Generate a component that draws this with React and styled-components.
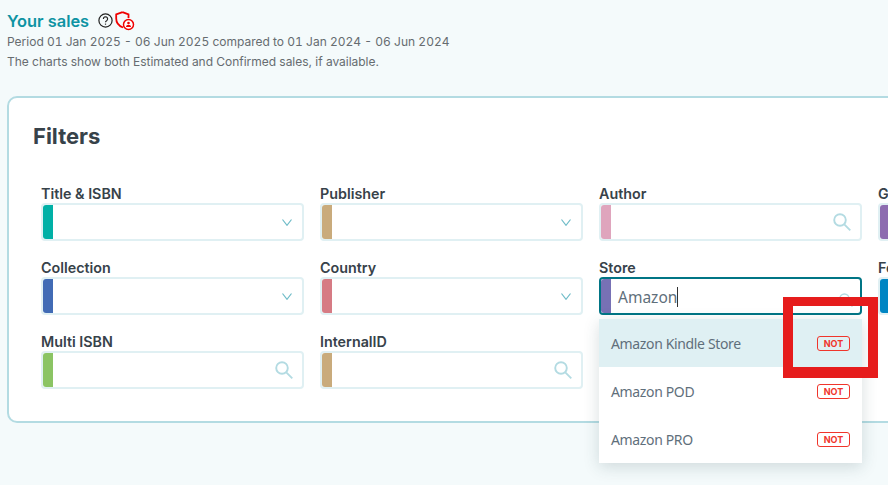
import React from "react";
import styled, {createGlobalStyle} from "styled-components";

const GlobalStyle = createGlobalStyle`
  html, body {
    margin: 0;
    height: 100%;
    overflow: hidden;
    background: #f4fafb;
    font-family: Inter, "Noto Sans", sans-serif;
  }
`;

const fields = [
  {label: "Title & ISBN", color: "#00b0a6", icon: "chevron"},
  {label: "Publisher", color: "#c9ab7c", icon: "chevron"},
  {label: "Author", color: "#dfa5bd", icon: "search"},
  {label: "Genre", color: "#8d6cb0", icon: "chevron"},
  {label: "Collection", color: "#416bb5", icon: "chevron"},
  {label: "Country", color: "#d67b84", icon: "chevron"},
  {label: "Store", color: "#7771b5", icon: "search", value: "Amazon", active: true},
  {label: "Format", color: "#0085c3", icon: "chevron"},
  {label: "Multi ISBN", color: "#8bc464", icon: "search"},
  {label: "InternalID", color: "#c9ab7c", icon: "search"},
];

const stores = ["Amazon Kindle Store", "Amazon POD", "Amazon PRO"];

const Chevron = () => (
  <svg width="10" height="7" viewBox="0 0 10 7" fill="none" stroke="#6fbcc8" strokeWidth="1.2">
    <path d="M.5.5 5 6.3 9.500.5" />
  </svg>
);

const Search = ({size = 18}) => (
  <svg width={size} height={size} viewBox="0 0 18 18" fill="none" stroke="#b3dbe2" strokeWidth="1.9">
    <circle cx="7" cy="7" r="5.800" />
    <path d="M11.300 11.300l6 6" />
  </svg>
);

const Help = () => (
  <svg width="15" height="15" viewBox="0 0 15 15" fill="none" stroke="#222" strokeWidth="1.2">
    <circle cx="7.500" cy="7.500" r="6.600" />
    <path d="M5.400 5.900a2.100 2.100 0 1 1 3.200 1.800c-.7.4-1.100.8-1.100 1.600" />
    <path d="M7.500 10.600v1.100" />
  </svg>
);

const ShieldLock = () => (
  <svg width="20" height="20" viewBox="0 0 20 20" fill="none" stroke="#f00000" strokeWidth="1.800">
    <path d="M7.500 1.200 13.500 3.400V7M8 16.500C4 15 1.200 12 1.200 7.500V3.400L7.500 1.200" />
    <circle cx="13.500" cy="13.500" r="5" fill="#fff" strokeWidth="1.500" />
    <circle cx="13.500" cy="12" r="1.300" fill="#f00000" stroke="none" />
    <path d="M11 16c0-3 5-3 5 0z" fill="#f00000" stroke="none" />
  </svg>
);

function App() {
  return (
    <Page>
      <GlobalStyle />
      <Header>
        <TitleRow>
          <Title>Your sales</Title>
          <Help />
          <ShieldLock />
        </TitleRow>
        <Note $tabular>Period 01 Jan 2025 - 06 Jun 2025 compared to 01 Jan 2024 - 06 Jun 2024</Note>
        <Note>The charts show both Estimated and Confirmed sales, if available.</Note>
      </Header>
      <Card>
        <Heading>Filters</Heading>
        <Grid>
          {fields.map((f) => (
            <Field key={f.label}>
              <Label>{f.label}</Label>
              <InputBox $active={f.active}>
                <Swatch $color={f.color} />
                {f.value && (
                  <Value>
                    {f.value}
                    <Caret />
                  </Value>
                )}
                {f.icon === "chevron" ? (
                  <IconSlot>
                    <Chevron />
                  </IconSlot>
                ) : (
                  <IconSlot $search $active={f.active}>
                    <Search size={f.active ? 14 : 18} />
                  </IconSlot>
                )}
              </InputBox>
              {f.active && (
                <Dropdown>
                  {stores.map((s, i) => (
                    <Option key={s} $selected={i === 0}>
                      <OptionText>{s}</OptionText>
                      <NotBadge>NOT</NotBadge>
                    </Option>
                  ))}
                </Dropdown>
              )}
            </Field>
          ))}
        </Grid>
      </Card>
      <Highlight />
    </Page>
  );
}
export default App;

const Page = styled.div`
  position: relative;
  width: 888px;
  height: 485px;
  overflow: hidden;
  padding: 9px 0 0 7px;
  box-sizing: border-box;
`;
const Header = styled.div`
  height: 87px;
`;
const TitleRow = styled.div`
  display: flex;
  align-items: center;
  gap: 9px;
  height: 23px;
  svg:last-child {
    margin-left: -7px;
  }
`;
const Title = styled.h1`
  margin: 0;
  font-size: 16.4px;
  font-weight: 600;
  color: #0e93a3;
`;
const Note = styled.p`
  margin: 0;
  font-size: 12px;
  line-height: 20px;
  color: #666c70;
  letter-spacing: ${(p) => (p.$tabular ? "0" : "-0.03px")};
  font-variant-numeric: ${(p) => (p.$tabular ? "tabular-nums" : "normal")};
`;
const Card = styled.section`
  width: 1100px;
  height: 327px;
  box-sizing: border-box;
  padding: 23px 24px 0 24px;
  background: #fff;
  border: 2px solid #b3dbe2;
  border-radius: 10px;
`;
const Heading = styled.h2`
  margin: 0 0 34px;
  font-size: 22px;
  line-height: 30px;
  font-weight: 700;
  color: #37424a;
`;
const Grid = styled.div`
  display: grid;
  grid-template-columns: repeat(4, 263px);
  column-gap: 16px;
  row-gap: 18px;
  padding-left: 8px;
`;
const Field = styled.div`
  position: relative;
`;
const Label = styled.div`
  font-size: 14.3px;
  line-height: 18px;
  font-weight: 600;
  color: #37424a;
`;
const InputBox = styled.div`
  display: flex;
  align-items: center;
  height: 38px;
  box-sizing: border-box;
  background: #fff;
  border: 2px solid ${(p) => (p.$active ? "#007585" : "#e0f0f3")};
  border-radius: 4px;
`;
const Swatch = styled.div`
  align-self: stretch;
  width: 10px;
  background: ${(p) => p.$color};
  border-radius: 3px 0 0 3px;
`;
const Value = styled.div`
  display: flex;
  align-items: center;
  margin-left: 7px;
  padding-top: 2px;
  font-family: "Noto Sans", sans-serif;
  font-size: 15.5px;
  color: #5f6f7b;
`;
const Caret = styled.span`
  width: 1px;
  height: 20px;
  background: #333;
`;
const IconSlot = styled.div`
  display: flex;
  margin-left: auto;
  margin-right: ${(p) => (p.$active ? "7px" : p.$search ? "9px" : "10px")};
  margin-top: ${(p) => (p.$active ? "8px" : "0")};
`;
const Dropdown = styled.div`
  position: absolute;
  top: 60px;
  left: 0;
  right: 0;
  z-index: 2;
  background: #fff;
  border-radius: 2px;
  box-shadow: 0 4px 16px rgba(40, 70, 80, 0.18);
`;
const Option = styled.div`
  display: flex;
  align-items: center;
  justify-content: space-between;
  height: 48px;
  padding: 0 12px;
  background: ${(p) => (p.$selected ? "#dff0f3" : "#fff")};
`;
const OptionText = styled.span`
  font-family: "Noto Sans", sans-serif;
  font-size: 14px;
  letter-spacing: -0.36px;
  color: #5f6f7b;
`;
const NotBadge = styled.span`
  width: 33px;
  height: 15px;
  box-sizing: border-box;
  border: 1px solid #f0352b;
  border-radius: 3px;
  text-align: center;
  font-family: Inter, sans-serif;
  font-size: 9px;
  line-height: 13px;
  font-weight: 700;
  color: #f0352b;
`;
const Highlight = styled.div`
  position: absolute;
  left: 783px;
  top: 297px;
  width: 95px;
  height: 81px;
  box-sizing: border-box;
  border: solid #e61c1c;
  border-width: 9px 10px 11px;
  z-index: 3;
`;
